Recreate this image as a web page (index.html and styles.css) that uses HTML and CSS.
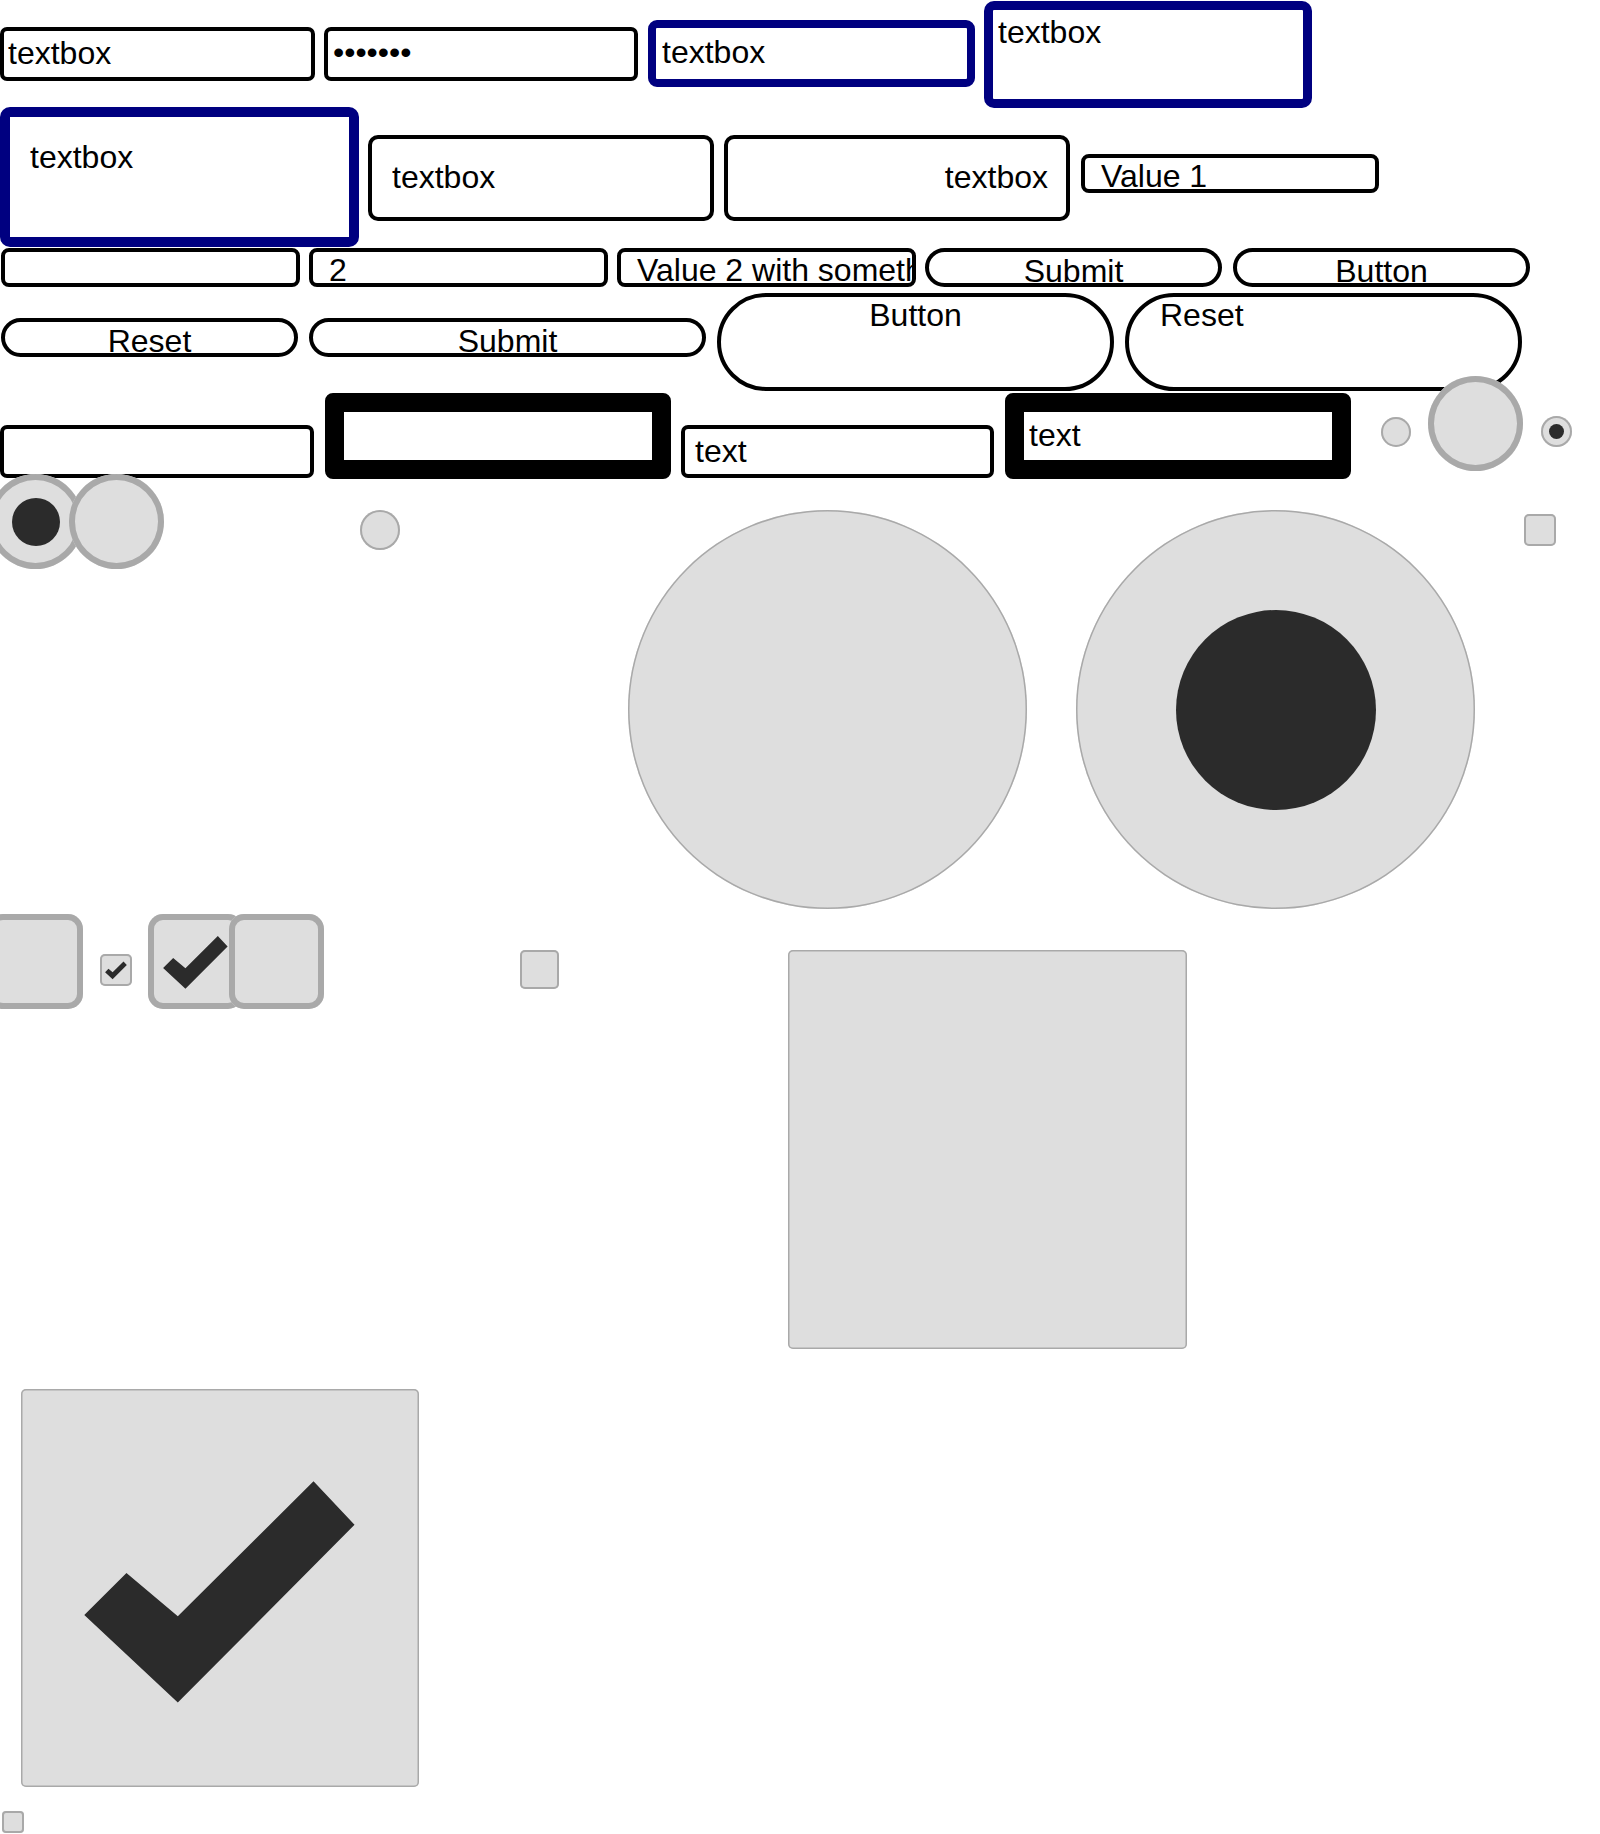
FILE: index.html
```html
<!DOCTYPE html>
<html>
<head>
<meta charset="utf-8">
<title>Form controls</title>
<link rel="stylesheet" href="styles.css">
</head>
<body>
<main class="page">
  <div class="row r1">
    <div class="field tb1">textbox</div>
    <div class="field pw">•••••••</div>
    <div class="field navy tb3">textbox</div>
    <div class="field navy tb4">textbox</div>
  </div>
  <div class="row r2">
    <div class="field navy ta1">textbox</div>
    <div class="field wide wl">textbox</div>
    <div class="field wide wr">textbox</div>
    <div class="field sel s1">Value 1</div>
  </div>
  <div class="row r3">
    <div class="field sel s2"></div>
    <div class="field sel s3">2</div>
    <div class="field sel s4">Value 2 with something long</div>
    <div class="field btn b1">Submit</div>
    <div class="field btn b2">Button</div>
  </div>
  <div class="row r4">
    <div class="field btn b3">Reset</div>
    <div class="field btn b4">Submit</div>
    <div class="field big bb1">Button</div>
    <div class="field big bb2">Reset</div>
  </div>
  <div class="row r5">
    <div class="field t5a"></div>
    <div class="field thick k1"></div>
    <div class="field t5b">text</div>
    <div class="field thick k2">text</div>
    <span class="radio ring-s ra1"></span>
    <span class="radio ring-m ra2"></span>
    <span class="radio ring-s ra3"><span class="dot d15"></span></span>
  </div>
  <div class="row r6">
    <span class="radio ring-m rb1"><span class="dot d48"></span></span>
    <span class="radio ring-m rb2"></span>
    <span class="radio ring-s rb3"></span>
    <span class="radio ring-l rb4"></span>
    <span class="radio ring-l rb5"><span class="dot d200"></span></span>
    <span class="check ring-s cs rb6"></span>
  </div>
  <div class="row r7">
    <span class="check ring-m cm cA"></span>
    <span class="check ring-s cs cB"><svg class="mark" viewBox="0 0 100 100"><polygon points="15.9,56.8 39.4,78.8 83.8,34.1 73.5,23.2 39.4,57.1 26.5,46.2"/></svg></span>
    <span class="check ring-m cm cC"><svg class="mark" viewBox="0 0 100 100"><polygon points="15.9,56.8 39.4,78.8 83.8,34.1 73.5,23.2 39.4,57.1 26.5,46.2"/></svg></span>
    <span class="check ring-m cm cD"></span>
    <span class="check ring-s cs cE"></span>
    <span class="check ring-l cl cF"></span>
  </div>
  <div class="row r8">
    <span class="check ring-l cl cG"><svg class="mark" viewBox="0 0 100 100"><polygon points="15.9,56.8 39.4,78.8 83.8,34.1 73.5,23.2 39.4,57.1 26.5,46.2"/></svg></span>
  </div>
  <div class="row r9">
    <span class="check ring-s cx cH"></span>
  </div>
</main>
</body>
</html>
```
FILE: styles.css
```css
* { box-sizing: border-box; margin: 0; padding: 0; }
html, body { background: #fff; }
body {
  margin: 0;
  width: 1600px;
  height: 1834px;
  overflow: hidden;
  font-family: "Liberation Sans", Arial, sans-serif;
  font-size: 32px;
  line-height: 37px;
  color: #000;
}
.page { display: flex; flex-direction: column; }
.row { display: flex; align-items: flex-start; flex: none; }

.field {
  flex: none;
  border: 4px solid #000;
  border-radius: 7px;
  background: #fff;
  white-space: nowrap;
  overflow: hidden;
}
.navy { border-color: #000080; }

/* row 1 */
.r1 { height: 107px; }
.tb1 { margin-top: 27px; width: 315px; height: 54px; padding: 4px 4px 0; }
.pw { margin: 27px 0 0 9px; width: 314px; height: 54px; padding: 3px 5px 0; }
.tb3 { margin: 20px 0 0 10px; width: 327px; height: 67px; border-width: 8px; border-radius: 9px; padding: 6px 6px 0; }
.tb4 { margin: 1px 0 0 9px; width: 328px; height: 107px; border-width: 9px; border-radius: 10px; padding: 4px 5px 0; }

/* row 2 */
.r2 { height: 141px; }
.ta1 { width: 359px; height: 140px; border-width: 10px; border-radius: 10px; padding: 22px 20px 0; }
.wide { margin-top: 28px; width: 346px; height: 86px; border-radius: 10px; padding: 20px 20px 0; }
.wl { margin-left: 9px; }
.wr { margin-left: 10px; text-align: right; padding-right: 18px; }
.sel { width: 299px; height: 39px; border-radius: 8px; padding: 3px 16px 0; line-height: 31px; }
.s1 { margin: 47px 0 0 11px; width: 298px; }

/* row 3 */
.r3 { height: 45px; }
.s2 { margin-left: 1px; }
.s3, .s4 { margin-left: 9px; }
.btn { height: 39px; border-radius: 20px; text-align: center; line-height: 27px; padding-top: 6px; overflow: visible; }
.b1 { margin-left: 9px; width: 297px; }
.b2 { margin-left: 11px; width: 297px; }

/* row 4 */
.r4 { height: 83px; }
.b3 { margin: 25px 0 0 1px; width: 297px; }
.b4 { margin: 25px 0 0 11px; width: 397px; }
.big { height: 98px; width: 397px; margin-left: 11px; border-radius: 49px; line-height: 37px; }
.bb1 { text-align: center; }
.bb2 { padding-left: 31px; }

/* row 5 */
.r5 { height: 98px; }
.t5a { margin-top: 49px; width: 314px; height: 53px; }
.thick { margin: 17px 0 0 11px; width: 346px; height: 86px; border-width: 19px; border-radius: 8px; }
.t5b { margin: 49px 0 0 10px; width: 313px; height: 53px; padding: 4px 10px 0; }
.k2 { padding: 5px 5px 0; }

/* radios & checkboxes */
.radio, .check {
  flex: none;
  display: flex;
  align-items: center;
  justify-content: center;
  background: #dedede;
}
.radio { border-radius: 50%; }
.ring-s { box-shadow: inset 0 0 0 2px #a9a9a9; }
.ring-m { box-shadow: inset 0 0 0 6px #a9a9a9; }
.ring-l { box-shadow: inset 0 0 0 1.5px #a9a9a9; }
.dot { display: block; border-radius: 50%; background: #2b2b2b; flex: none; }
.d15 { width: 15px; height: 15px; }
.d48 { width: 48px; height: 48px; }
.d200 { width: 200px; height: 200px; }
.cs { border-radius: 5px; }
.cm { border-radius: 15px; }
.cl { border-radius: 5px; }
.cx { border-radius: 4px; }
.mark { width: 100%; height: 100%; display: block; fill: #2b2b2b; }

.ra1 { margin: 41px 0 0 30px; width: 30px; height: 30px; }
.ra2 { margin: 0 0 0 17px; width: 95px; height: 95px; }
.ra3 { margin: 40px 0 0 18px; width: 31px; height: 31px; }

/* row 6 */
.r6 { height: 440px; }
.rb1 { margin-left: -12px; width: 95px; height: 95px; }
.rb2 { margin-left: -14px; width: 95px; height: 95px; }
.rb3 { margin: 36px 0 0 196px; width: 40px; height: 40px; }
.rb4 { margin: 36px 0 0 228px; width: 399px; height: 399px; }
.rb5 { margin: 36px 0 0 49px; width: 399px; height: 399px; }
.rb6 { margin: 40px 0 0 49px; width: 32px; height: 32px; }

/* row 7 */
.r7 { height: 475px; }
.cA { margin-left: -12px; width: 95px; height: 95px; }
.cB { margin: 40px 0 0 17px; width: 32px; height: 32px; }
.cC { margin-left: 16px; width: 95px; height: 95px; }
.cD { margin-left: -14px; width: 95px; height: 95px; }
.cE { margin: 36px 0 0 196px; width: 39px; height: 39px; }
.cF { margin: 36px 0 0 229px; width: 399px; height: 399px; }

/* row 8 / 9 */
.r8 { height: 422px; }
.cG { margin-left: 21px; width: 398px; height: 398px; }
.r9 { height: 23px; }
.cH { margin-left: 2px; width: 22px; height: 22px; }
```
